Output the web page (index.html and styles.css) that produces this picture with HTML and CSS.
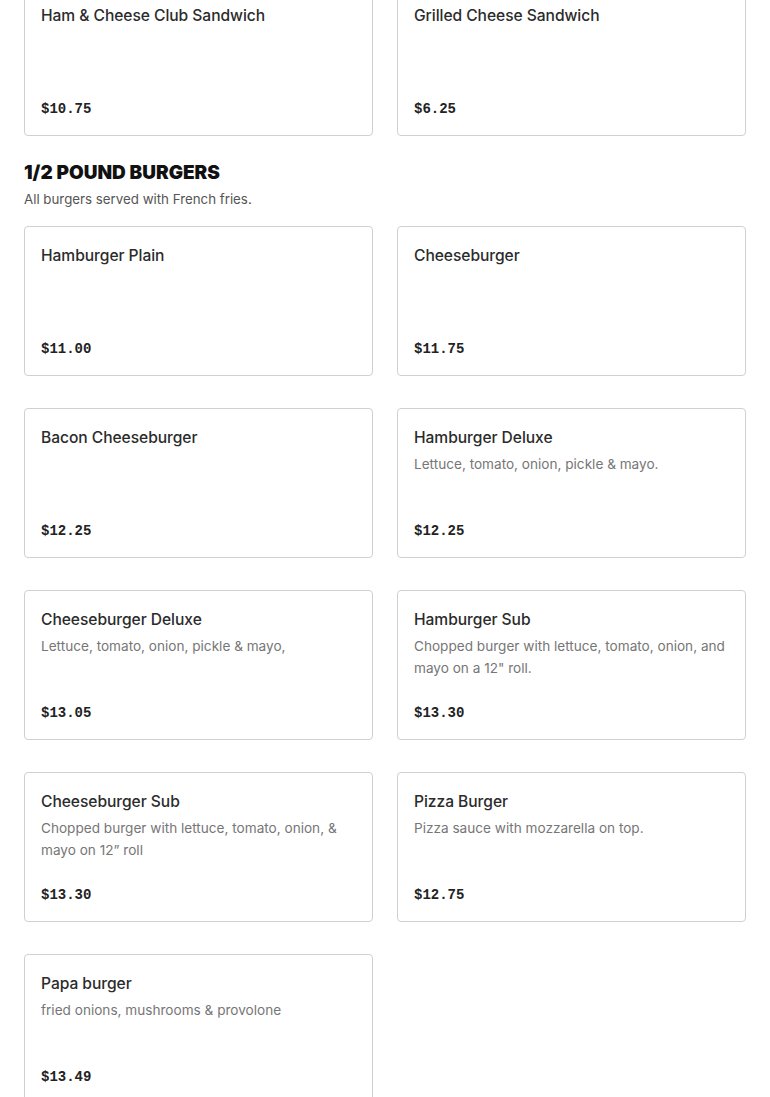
FILE: index.html
```html
<!DOCTYPE html>
<html>
<head>
<meta charset="utf-8">
<link rel="stylesheet" href="styles.css">
</head>
<body>
<main class="menu">
  <section class="section section-cont">
    <div class="grid">
      <div class="card"><div class="name">Ham &amp; Cheese Club Sandwich</div><div class="price">$10.75</div></div>
      <div class="card"><div class="name">Grilled Cheese Sandwich</div><div class="price">$6.25</div></div>
    </div>
  </section>
  <section class="section">
    <h2 class="heading">1/2 POUND BURGERS</h2>
    <p class="sub">All burgers served with French fries.</p>
    <div class="grid">
      <div class="card"><div class="name">Hamburger Plain</div><div class="price">$11.00</div></div>
      <div class="card"><div class="name">Cheeseburger</div><div class="price">$11.75</div></div>
      <div class="card"><div class="name">Bacon Cheeseburger</div><div class="price">$12.25</div></div>
      <div class="card"><div class="name">Hamburger Deluxe</div><div class="desc">Lettuce, tomato, onion, pickle &amp; mayo.</div><div class="price">$12.25</div></div>
      <div class="card"><div class="name">Cheeseburger Deluxe</div><div class="desc">Lettuce, tomato, onion, pickle &amp; mayo,</div><div class="price">$13.05</div></div>
      <div class="card"><div class="name">Hamburger Sub</div><div class="desc">Chopped burger with lettuce, tomato, onion, and mayo on a 12" roll.</div><div class="price">$13.30</div></div>
      <div class="card"><div class="name">Cheeseburger Sub</div><div class="desc">Chopped burger with lettuce, tomato, onion, &amp; mayo on 12” roll</div><div class="price">$13.30</div></div>
      <div class="card"><div class="name">Pizza Burger</div><div class="desc">Pizza sauce with mozzarella on top.</div><div class="price">$12.75</div></div>
      <div class="card"><div class="name">Papa burger</div><div class="desc">fried onions, mushrooms &amp; provolone</div><div class="price">$13.49</div></div>
    </div>
  </section>
</main>
</body>
</html>
```
FILE: styles.css
```css
* { box-sizing: border-box; }
html, body { margin: 0; padding: 0; background: #fff; }
body { font-family: Inter, "Liberation Sans", sans-serif; color: #2b2b2b; }
.menu { padding: 0 24px; display: flex; flex-direction: column; gap: 25px; }
.section-cont { margin-top: -14px; }
.heading {
  margin: 0;
  font-size: 19px;
  font-weight: 900;
  line-height: 24px;
  color: #111;
  letter-spacing: 0;
}
.sub { margin: 3px 0 16px; font-size: 13.3px; line-height: 22px; color: #555; }
.grid { display: grid; grid-template-columns: 1fr 1fr; column-gap: 24px; row-gap: 32px; }
.card {
  height: 150px;
  border: 1px solid #d0d0d0;
  border-radius: 4px;
  padding: 16px 16px 14px;
  display: flex;
  flex-direction: column;
}
.name { font-size: 15.6px; font-weight: 500; line-height: 26px; color: #2b2b2b; letter-spacing: -0.05px; }
.desc { margin-top: 2px; font-size: 13.6px; line-height: 22px; color: #767676; }
.price {
  margin-top: auto;
  font-family: "Liberation Mono", monospace;
  font-weight: 700;
  font-size: 14px;
  line-height: 24px;
  color: #222;
}
```
